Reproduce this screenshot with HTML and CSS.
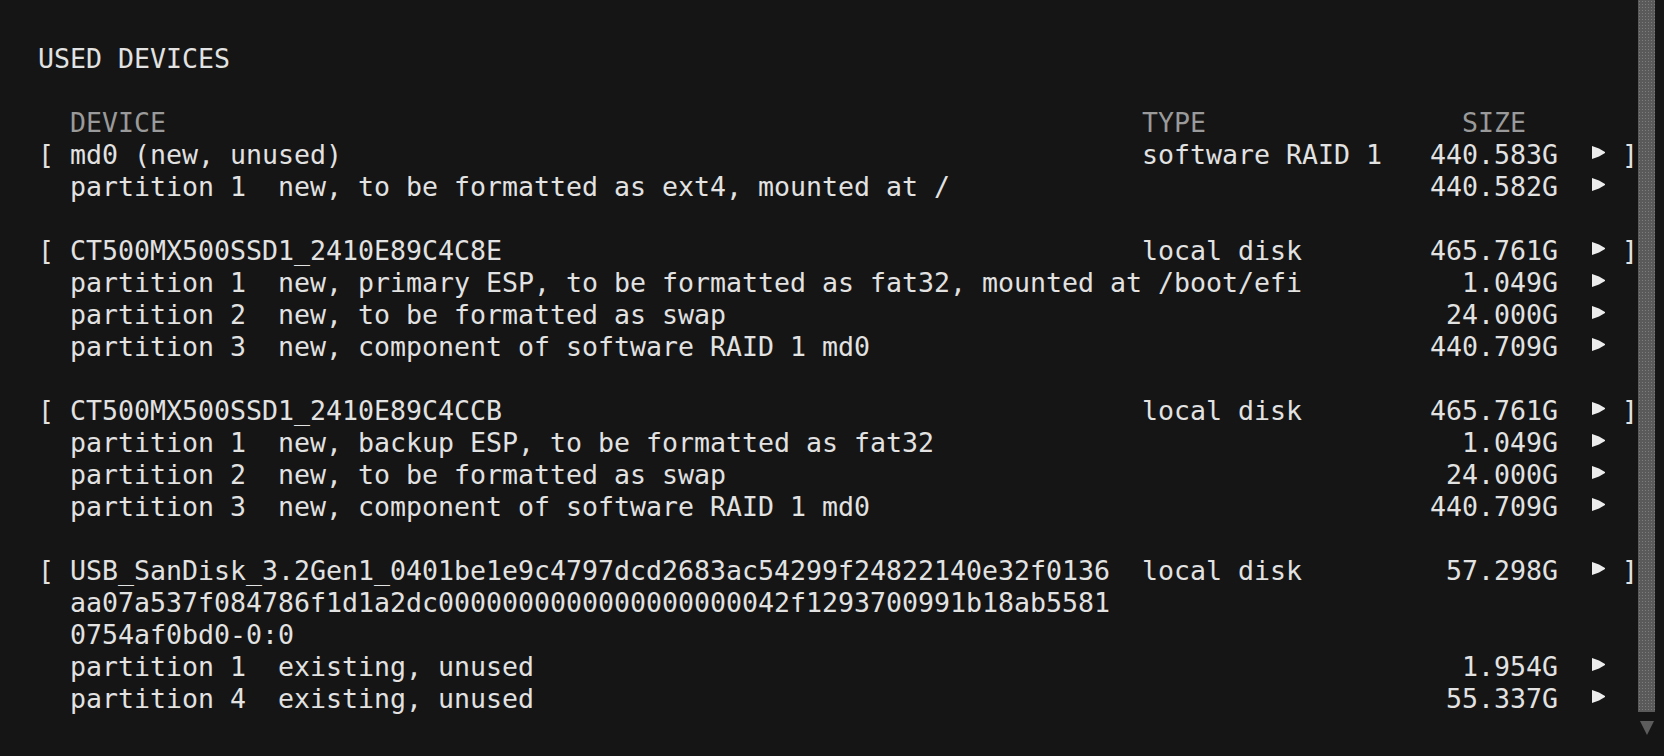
FILE: index.html
```html
<!DOCTYPE html>
<html lang="en">
<head>
<meta charset="utf-8">
<title>Used devices</title>
<link rel="stylesheet" href="styles.css">
</head>
<body>
<div class="term">
  <main class="screen">
    <div class="title">USED DEVICES</div>
    <div class="blank"></div>
    <div class="row head">
      <span class="c-name">DEVICE</span>
      <span class="c-type">TYPE</span>
      <span class="c-size center">SIZE</span>
    </div>

    <div class="row">
      <span class="c-br">[</span>
      <span class="c-name">md0 (new, unused)</span>
      <span class="c-type">software RAID 1</span>
      <span class="c-size">440.583G</span>
      <span class="c-arrow"><svg class="tri" viewBox="0 0 13 13"><path d="M0 0L7 2.5L13 6L13 7L7 10.5L0 13Z"/></svg></span>
      <span class="c-end">]</span>
    </div>
    <div class="row">
      <span class="c-part"><span class="plabel">partition 1</span><span>new, to be formatted as ext4, mounted at /</span></span>
      <span class="c-size">440.582G</span>
      <span class="c-arrow"><svg class="tri" viewBox="0 0 13 13"><path d="M0 0L7 2.5L13 6L13 7L7 10.5L0 13Z"/></svg></span>
    </div>
    <div class="blank"></div>

    <div class="row">
      <span class="c-br">[</span>
      <span class="c-name">CT500MX500SSD1_2410E89C4C8E</span>
      <span class="c-type">local disk</span>
      <span class="c-size">465.761G</span>
      <span class="c-arrow"><svg class="tri" viewBox="0 0 13 13"><path d="M0 0L7 2.5L13 6L13 7L7 10.5L0 13Z"/></svg></span>
      <span class="c-end">]</span>
    </div>
    <div class="row">
      <span class="c-part"><span class="plabel">partition 1</span><span>new, primary ESP, to be formatted as fat32, mounted at /boot/efi</span></span>
      <span class="c-size">1.049G</span>
      <span class="c-arrow"><svg class="tri" viewBox="0 0 13 13"><path d="M0 0L7 2.5L13 6L13 7L7 10.5L0 13Z"/></svg></span>
    </div>
    <div class="row">
      <span class="c-part"><span class="plabel">partition 2</span><span>new, to be formatted as swap</span></span>
      <span class="c-size">24.000G</span>
      <span class="c-arrow"><svg class="tri" viewBox="0 0 13 13"><path d="M0 0L7 2.5L13 6L13 7L7 10.5L0 13Z"/></svg></span>
    </div>
    <div class="row">
      <span class="c-part"><span class="plabel">partition 3</span><span>new, component of software RAID 1 md0</span></span>
      <span class="c-size">440.709G</span>
      <span class="c-arrow"><svg class="tri" viewBox="0 0 13 13"><path d="M0 0L7 2.5L13 6L13 7L7 10.5L0 13Z"/></svg></span>
    </div>
    <div class="blank"></div>

    <div class="row">
      <span class="c-br">[</span>
      <span class="c-name">CT500MX500SSD1_2410E89C4CCB</span>
      <span class="c-type">local disk</span>
      <span class="c-size">465.761G</span>
      <span class="c-arrow"><svg class="tri" viewBox="0 0 13 13"><path d="M0 0L7 2.5L13 6L13 7L7 10.5L0 13Z"/></svg></span>
      <span class="c-end">]</span>
    </div>
    <div class="row">
      <span class="c-part"><span class="plabel">partition 1</span><span>new, backup ESP, to be formatted as fat32</span></span>
      <span class="c-size">1.049G</span>
      <span class="c-arrow"><svg class="tri" viewBox="0 0 13 13"><path d="M0 0L7 2.5L13 6L13 7L7 10.5L0 13Z"/></svg></span>
    </div>
    <div class="row">
      <span class="c-part"><span class="plabel">partition 2</span><span>new, to be formatted as swap</span></span>
      <span class="c-size">24.000G</span>
      <span class="c-arrow"><svg class="tri" viewBox="0 0 13 13"><path d="M0 0L7 2.5L13 6L13 7L7 10.5L0 13Z"/></svg></span>
    </div>
    <div class="row">
      <span class="c-part"><span class="plabel">partition 3</span><span>new, component of software RAID 1 md0</span></span>
      <span class="c-size">440.709G</span>
      <span class="c-arrow"><svg class="tri" viewBox="0 0 13 13"><path d="M0 0L7 2.5L13 6L13 7L7 10.5L0 13Z"/></svg></span>
    </div>
    <div class="blank"></div>

    <div class="row">
      <span class="c-br">[</span>
      <span class="c-name wrap">USB_SanDisk_3.2Gen1_0401be1e9c4797dcd2683ac54299f24822140e32f0136aa07a537f084786f1d1a2dc0000000000000000000042f1293700991b18ab55810754af0bd0-0:0</span>
      <span class="c-type">local disk</span>
      <span class="c-size">57.298G</span>
      <span class="c-arrow"><svg class="tri" viewBox="0 0 13 13"><path d="M0 0L7 2.5L13 6L13 7L7 10.5L0 13Z"/></svg></span>
      <span class="c-end">]</span>
    </div>
    <div class="row">
      <span class="c-part"><span class="plabel">partition 1</span><span>existing, unused</span></span>
      <span class="c-size">1.954G</span>
      <span class="c-arrow"><svg class="tri" viewBox="0 0 13 13"><path d="M0 0L7 2.5L13 6L13 7L7 10.5L0 13Z"/></svg></span>
    </div>
    <div class="row">
      <span class="c-part"><span class="plabel">partition 4</span><span>existing, unused</span></span>
      <span class="c-size">55.337G</span>
      <span class="c-arrow"><svg class="tri" viewBox="0 0 13 13"><path d="M0 0L7 2.5L13 6L13 7L7 10.5L0 13Z"/></svg></span>
    </div>
  </main>
  <aside class="scroll">
    <div class="thumb"></div>
    <svg class="down" viewBox="0 0 14 14"><path d="M0 0H14L7 14Z"/></svg>
  </aside>
</div>
</body>
</html>
```

FILE: styles.css
```css
html, body {
  margin: 0;
  padding: 0;
  background: #151515;
}

.term {
  display: flex;
  width: 1664px;
  height: 756px;
  overflow: hidden;
  background: #151515;
  color: #e2e2e2;
  font-family: "DejaVu Sans Mono", "Liberation Mono", monospace;
  font-size: 26.58px;
  line-height: 32px;
}

.screen {
  flex: 1;
  padding: 43px 0 0 38px;
  white-space: nowrap;
}

.title {
  height: 32px;
}

.blank {
  height: 32px;
}

.row {
  display: grid;
  grid-template-columns: 2ch 65ch 2ch 18ch 8ch 2ch 1ch 1ch 1ch;
  align-items: start;
}

.head {
  color: #9a9a9a;
}

.c-br { grid-column: 1; }
.c-name { grid-column: 2; }
.c-type { grid-column: 4; }
.c-size { grid-column: 5; text-align: right; }
.c-size.center { text-align: center; }
.c-arrow {
  grid-column: 7;
  height: 32px;
  display: flex;
  align-items: center;
  justify-content: center;
}
.c-end { grid-column: 9; }

.c-part {
  grid-column: 2 / 5;
  display: flex;
}

.plabel {
  width: 13ch;
  flex: none;
}

.wrap {
  white-space: normal;
  word-break: break-all;
}

.tri {
  width: 13px;
  height: 13px;
  margin-top: -5px;
  fill: #ececec;
}

.scroll {
  width: 17px;
  margin-right: 10px;
  display: flex;
  flex-direction: column;
  align-items: center;
}

.thumb {
  width: 17px;
  height: 712px;
  background-color: #5a5a5a;
  background-image: radial-gradient(#7c7c7c 0.8px, transparent 1px);
  background-size: 3px 3px;
}

.down {
  width: 14px;
  height: 14px;
  margin-top: 9px;
  fill: #5c5c5c;
}
```
